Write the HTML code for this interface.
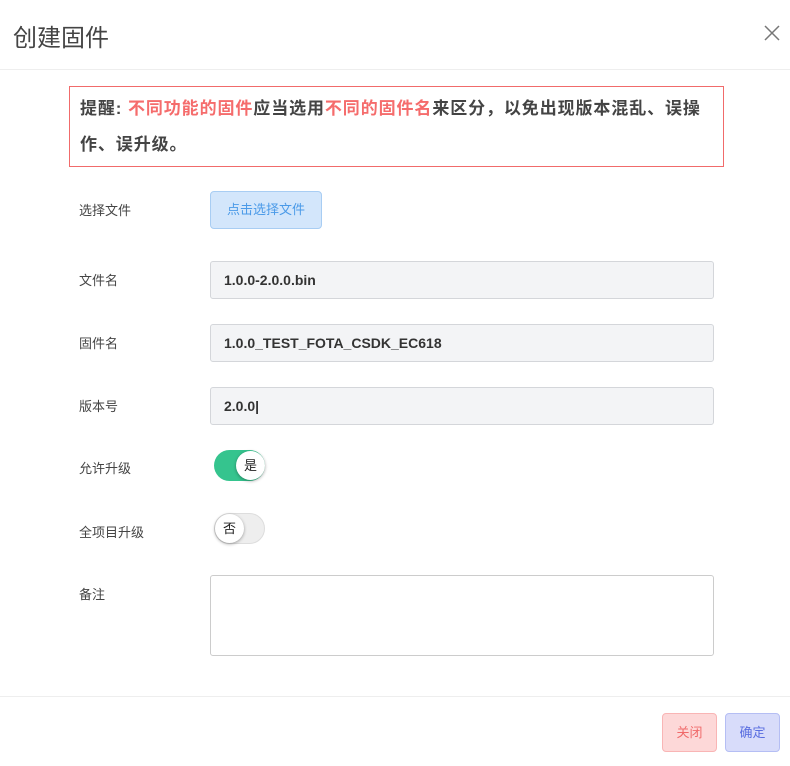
<!DOCTYPE html>
<html><head><meta charset="utf-8"><style>
*{box-sizing:border-box;margin:0;padding:0}
body{width:790px;height:766px;background:#fff;font-family:"Liberation Sans","Noto Sans CJK SC",sans-serif;color:#333;position:relative;overflow:hidden}
.abs{position:absolute}
.title{left:13px;top:18px;font-size:24px;color:#444}
.close{left:763px;top:24px;width:18px;height:18px}
.hr{left:0;width:790px;height:1px;background:#eee}
.warn{left:69px;top:86px;width:655px;height:81px;border:1px solid #f16b6b;padding:4px 10px;font-size:17px;font-weight:bold;line-height:36px;letter-spacing:0.9px;color:#444}
.red{color:#f56c6c}
.lbl{left:79px;font-size:13px;color:#444}
.inp{left:210px;width:504px;height:38px;background:#f3f4f6;border:1px solid #d4d6da;border-radius:3px;padding-left:13px;line-height:36px;font-size:14px;font-weight:bold;color:#333}
.btn{border-radius:4px;font-size:13px;text-align:center}
.sw{width:51px;height:31px;border-radius:16px}
.knob{width:29px;height:29px;border-radius:50%;background:#fff;box-shadow:0 1px 3px rgba(0,0,0,.35);font-size:13px;text-align:center;line-height:29px;color:#222}
</style></head><body>
<div class="abs title">创建固件</div>
<svg class="abs close" viewBox="0 0 18 18"><path d="M2 2L16 16M16 2L2 16" stroke="#777" stroke-width="1.5"/></svg>
<div class="abs hr" style="top:69px"></div>
<div class="abs warn">提醒: <span class="red">不同功能的固件</span>应当选用<span class="red">不同的固件名</span>来区分，以免出现版本混乱、误操作、误升级。</div>
<div class="abs lbl" style="top:200px">选择文件</div>
<div class="abs btn" style="left:210px;top:191px;width:112px;height:38px;background:#d3e6fb;border:1px solid #a8cdf3;color:#4a9ae8;line-height:36px">点击选择文件</div>
<div class="abs lbl" style="top:270px">文件名</div>
<div class="abs inp" style="top:261px">1.0.0-2.0.0.bin</div>
<div class="abs lbl" style="top:333px">固件名</div>
<div class="abs inp" style="top:324px">1.0.0_TEST_FOTA_CSDK_EC618</div>
<div class="abs lbl" style="top:396px">版本号</div>
<div class="abs inp" style="top:387px">2.0.0|</div>
<div class="abs lbl" style="top:458px">允许升级</div>
<div class="abs sw" style="left:214px;top:450px;background:#35c48e"></div>
<div class="abs knob" style="left:236px;top:451px">是</div>
<div class="abs lbl" style="top:522px">全项目升级</div>
<div class="abs sw" style="left:214px;top:513px;background:#eee;border:1px solid #ddd"></div>
<div class="abs knob" style="left:215px;top:514px">否</div>
<div class="abs lbl" style="top:584px">备注</div>
<div class="abs" style="left:210px;top:575px;width:504px;height:81px;border:1px solid #ccc;border-radius:3px"></div>
<div class="abs hr" style="top:696px"></div>
<div class="abs btn" style="left:662px;top:713px;width:55px;height:39px;background:#fdd8d8;border:1px solid #f9b5b5;color:#f06a6a;line-height:37px">关闭</div>
<div class="abs btn" style="left:725px;top:713px;width:55px;height:39px;background:#d8dcfa;border:1px solid #b5bef4;color:#5a6ee0;line-height:37px">确定</div>
</body></html>
